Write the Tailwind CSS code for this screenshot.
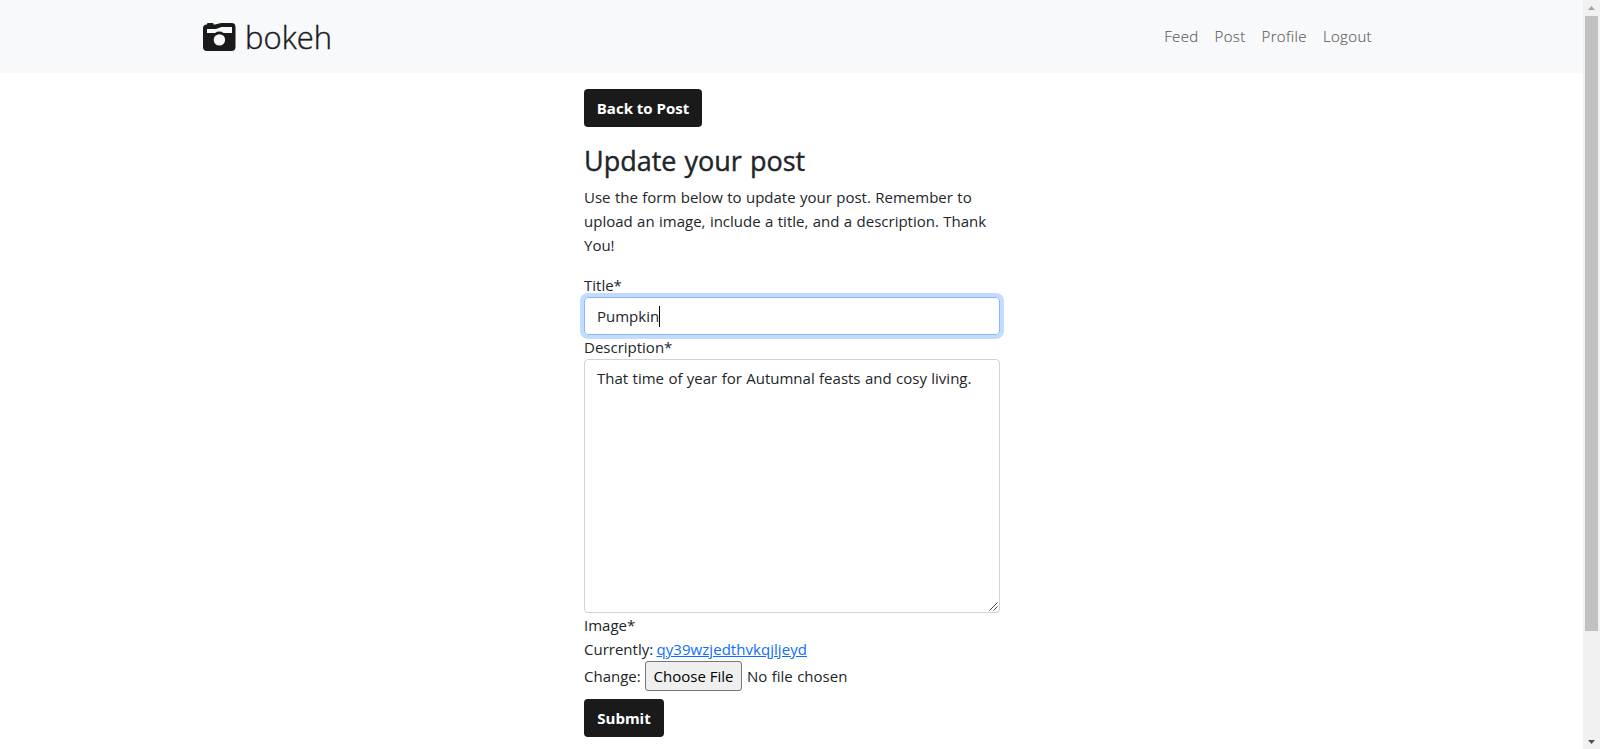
<!DOCTYPE html>
<html lang="en">
<head>
<meta charset="utf-8">
<title>bokeh</title>
<script src="https://cdn.jsdelivr.net/npm/@tailwindcss/browser@4"></script>
</head>
<body class="flex h-screen overflow-hidden bg-white font-['Open_Sans','Noto_Sans',sans-serif] text-[15px] leading-6 text-[#212529] [word-spacing:0.5px]">
<div class="min-w-0 flex-1">
  <header class="flex h-[73px] items-center justify-between bg-[#f8f9fa] pr-[211px] pl-[203px]">
    <a class="flex items-center text-[#1a1a1a]" href="#">
      <svg class="mr-[9px] h-7 w-[33px]" viewBox="0 0 33 28" fill="currentColor"><path fill-rule="evenodd" d="M4 1.500V1Q4 0 5 0H9.500Q10.500 0 10.500 1V1.500H12L17 .3Q18 0 19 0H28.500Q32.500 0 32.500 4V24Q32.500 28 28.500 28H4Q0 28 0 24V5Q0 1.500 4 1.500ZM4 6V10H12Q14 8.600 16.300 8.600T20.600 10H29V4H18.500L13 6ZM16.400 11.200A5.700 5.700 0 1 0 16.400 22.600A5.700 5.700 0 1 0 16.400 11.200Z"/></svg>
      <span class="text-[31px] leading-[48px] font-light [-webkit-text-stroke:0.4px_#1a1a1a]">bokeh</span>
    </a>
    <nav class="flex gap-4 pb-px text-[15px] font-light tracking-[0.35px] text-[#5c5d5e] [-webkit-text-stroke:0.15px_#5c5d5e]">
      <a href="#">Feed</a><a href="#">Post</a><a href="#">Profile</a><a href="#">Logout</a>
    </nav>
  </header>
  <main class="ml-[584px] w-[416px] pt-4">
    <button class="block h-[38px] w-[118px] rounded bg-[#1a1a1a] font-bold text-white [word-spacing:0px]">Back to Post</button>
    <h1 class="mt-4 mb-[7px] text-[27px] leading-[35px] font-medium [-webkit-text-stroke:0.4px_#212529] [word-spacing:1px]">Update your post</h1>
    <p class="mb-4 whitespace-nowrap">Use the form below to update your post. Remember to<br>upload an image, include a title, and a description. Thank<br>You!</p>
    <div class="h-6">Title*</div>
    <div class="flex h-[38px] items-center rounded border border-[#86b7fe] px-3 ring-4 ring-[#c2dbff]">Pumpkin<span class="h-[21px] w-px bg-black"></span></div>
    <div>Description*</div>
    <div class="relative h-[254px] rounded border border-[#ced4da] px-3 py-1.5 whitespace-nowrap">That time of year for Autumnal feasts and cosy living.
      <svg class="absolute right-px bottom-px h-[9px] w-[9px]" viewBox="0 0 9 9" stroke="#444" stroke-width="1"><path d="M.5 8.500L8.500 .5M4.500 8.500L8.500 4.500"/></svg>
    </div>
    <div>Image*</div>
    <div class="[word-spacing:-0.5px]">Currently: <a class="tracking-[0.05px] text-[#0d6efd] underline" href="#">qy39wzjedthvkqjljeyd</a></div>
    <div class="flex h-[30px] items-center"><span class="w-[61px]">Change:</span><button class="h-[30px] w-[97px] rounded-[3px] border border-[#767676] bg-[#efefef] text-black">Choose File</button><span class="ml-[5px]">No file chosen</span></div>
    <button class="mt-2 block h-[38px] w-20 rounded bg-[#1a1a1a] font-bold text-white">Submit</button>
  </main>
</div>
<div class="flex w-[17px] flex-col items-center justify-between bg-[#f1f1f1] pt-1.5 pb-[5px]">
  <svg class="h-1 w-[7px]" viewBox="0 0 7 4" fill="#a3a3a3"><path d="M0 4L3.500 0L7 4Z"/></svg>
  <div class="mt-1.5 mb-auto h-[615px] w-[13px] bg-[#c1c1c1]"></div>
  <svg class="h-1 w-[7px]" viewBox="0 0 7 4" fill="#505050"><path d="M0 0L3.500 4L7 0Z"/></svg>
</div>
</body>
</html>
